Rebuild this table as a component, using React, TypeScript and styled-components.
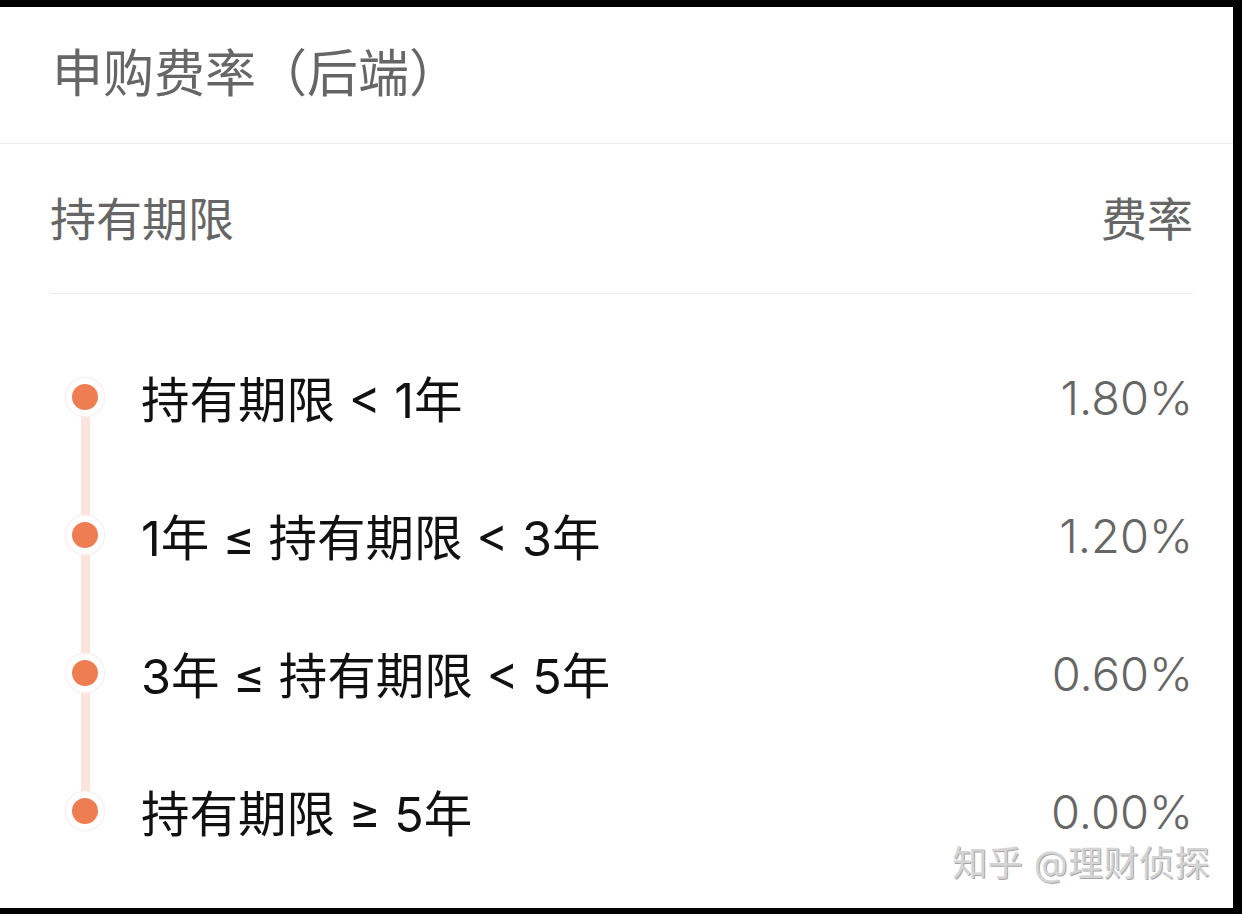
import styled, {createGlobalStyle} from "styled-components";

const GlobalStyle = createGlobalStyle`
  html, body {
    margin: 0;
    padding: 0;
    background: #000;
  }
  body {
    font-family: Inter, "Noto Sans CJK SC", sans-serif;
  }
`;

const Frame = styled.div`
  width: 1242px;
  height: 914px;
  padding: 7px 9px 6px 0;
  box-sizing: border-box;
  background: #000;
`;

const Card = styled.div`
  position: relative;
  width: 100%;
  height: 100%;
  background: #fff;
  display: flex;
  flex-direction: column;
  overflow: hidden;
`;

const TitleBar = styled.div`
  height: 137px;
  display: flex;
  align-items: center;
  padding-left: 52px;
  padding-bottom: 10px;
  border-bottom: 1.5px solid #ececec;
  box-sizing: border-box;
`;

const Title = styled.h2`
  margin: 0;
  font-size: 51px;
  font-weight: 400;
  color: #666;
  letter-spacing: 0;
`;

const Section = styled.div`
  padding: 0 40px 0 50px;
  display: flex;
  flex-direction: column;
`;

const HeaderRow = styled.div`
  height: 150px;
  display: flex;
  align-items: center;
  justify-content: space-between;
  border-bottom: 1.5px solid #ececec;
  box-sizing: border-box;
  font-size: 46px;
  color: #666;
  padding-bottom: 6px;
`;

const List = styled.div`
  position: relative;
  margin-top: 34px;
  display: flex;
  flex-direction: column;

  &::before {
    content: "";
    position: absolute;
    left: 31px;
    width: 9px;
    top: 69px;
    bottom: 69px;
    background: #fbe4dc;
  }
`;

const Row = styled.div`
  position: relative;
  height: 138px;
  display: flex;
  align-items: center;
`;

const Marker = styled.div`
  width: 70px;
  display: flex;
  justify-content: center;
`;

const Dot = styled.span`
  width: 26px;
  height: 26px;
  border-radius: 50%;
  background: #ef7d52;
  border: 6px solid #fff;
  box-shadow: 0 0 0 1.5px #f7f1ef;
`;

const Label = styled.span`
  margin-left: 21px;
  flex: 1;
  font-size: 48.5px;
  color: #111;
  white-space: pre;
`;

const Value = styled.span`
  font-size: 47px;
  color: #666;
  font-weight: 350;
`;

const Watermark = styled.div`
  position: absolute;
  right: 23px;
  bottom: 22px;
  font-size: 35px;
  color: #d4d4d4;
  letter-spacing: 0.5px;
  text-shadow: 1px 1px 0 #a8a8a8, -1px -1px 0 #fff;
`;

const rows = [
    {label: "持有期限 < 1年", rate: "1.80%"},
    {label: "1年 ≤ 持有期限 < 3年", rate: "1.20%"},
    {label: "3年 ≤ 持有期限 < 5年", rate: "0.60%"},
    {label: "持有期限 ≥ 5年", rate: "0.00%"},
];

const App = () => {
    return (
        <>
            <GlobalStyle/>
            <Frame>
                <Card>
                    <TitleBar>
                        <Title>申购费率（后端）</Title>
                    </TitleBar>
                    <Section>
                        <HeaderRow>
                            <span>持有期限</span>
                            <span>费率</span>
                        </HeaderRow>
                        <List>
                            {rows.map((r) => (
                                <Row key={r.label}>
                                    <Marker><Dot/></Marker>
                                    <Label>{r.label}</Label>
                                    <Value>{r.rate}</Value>
                                </Row>
                            ))}
                        </List>
                    </Section>
                    <Watermark>知乎 @理财侦探</Watermark>
                </Card>
            </Frame>
        </>
    );
};

export default App;
